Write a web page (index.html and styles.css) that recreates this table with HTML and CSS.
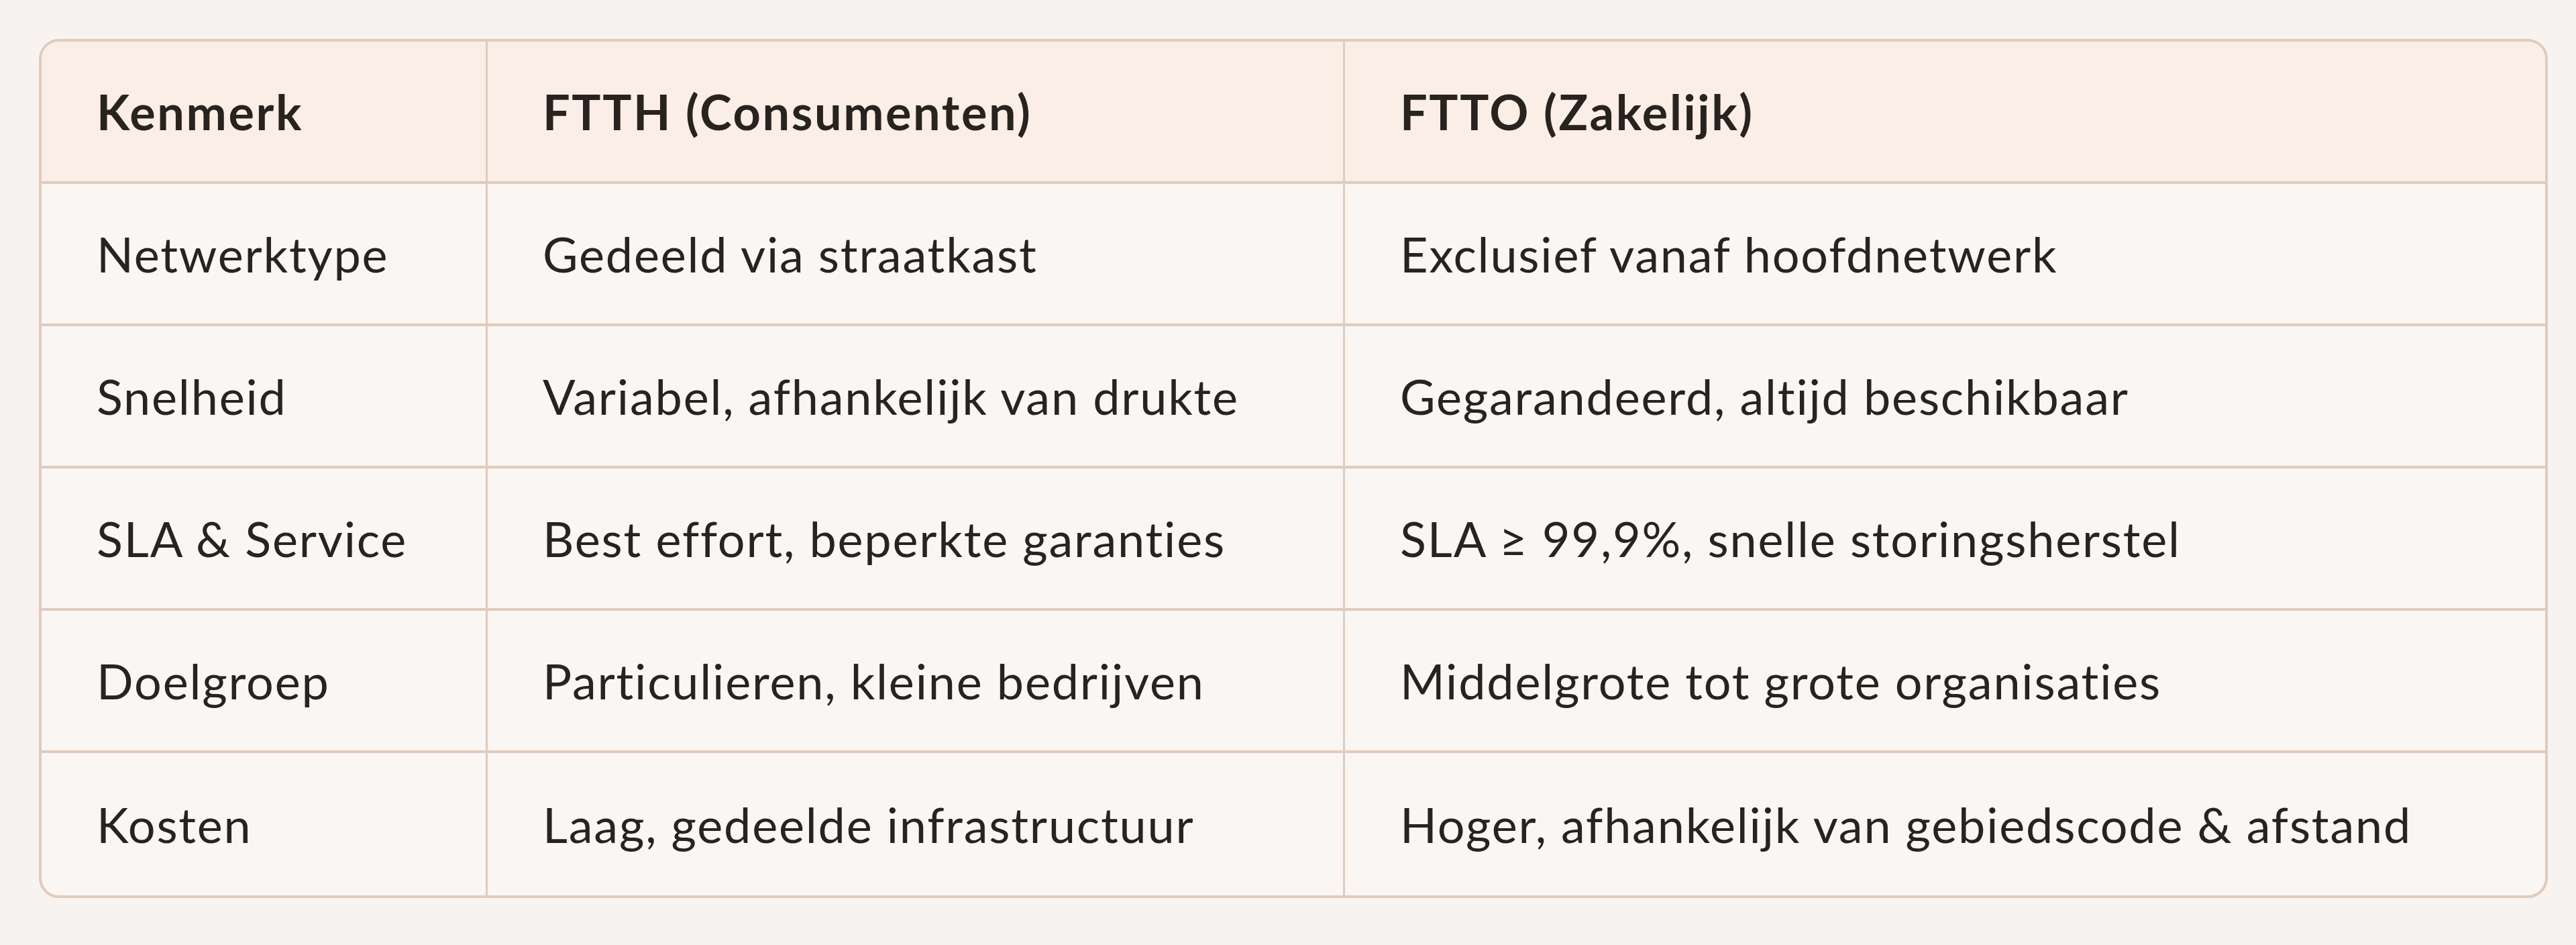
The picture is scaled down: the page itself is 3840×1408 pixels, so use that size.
FILE: index.html
```html
<!DOCTYPE html>
<html lang="nl">
<head>
<meta charset="utf-8">
<title>FTTH vs FTTO</title>
<link rel="stylesheet" href="styles.css">
</head>
<body>
<div class="page">
  <div class="table-wrap">
    <table class="compare">
      <colgroup>
        <col class="c1"><col class="c2"><col class="c3">
      </colgroup>
      <thead>
        <tr>
          <th>Kenmerk</th>
          <th>FTTH (Consumenten)</th>
          <th>FTTO (Zakelijk)</th>
        </tr>
      </thead>
      <tbody>
        <tr>
          <td>Netwerktype</td>
          <td>Gedeeld via straatkast</td>
          <td>Exclusief vanaf hoofdnetwerk</td>
        </tr>
        <tr>
          <td>Snelheid</td>
          <td>Variabel, afhankelijk van drukte</td>
          <td>Gegarandeerd, altijd beschikbaar</td>
        </tr>
        <tr>
          <td>SLA &amp; Service</td>
          <td>Best effort, beperkte garanties</td>
          <td>SLA ≥ 99,9%, snelle storingsherstel</td>
        </tr>
        <tr>
          <td>Doelgroep</td>
          <td>Particulieren, kleine bedrijven</td>
          <td>Middelgrote tot grote organisaties</td>
        </tr>
        <tr>
          <td>Kosten</td>
          <td>Laag, gedeelde infrastructuur</td>
          <td>Hoger, afhankelijk van gebiedscode &amp; afstand</td>
        </tr>
      </tbody>
    </table>
  </div>
</div>
</body>
</html>
```
FILE: styles.css
```css
html, body {
  margin: 0;
  padding: 0;
  background: #f7f3f0;
}

.page {
  padding: 58px 42px 58px 58px;
  font-family: "Lato", "Open Sans", "Liberation Sans", sans-serif;
  color: #28231f;
}

.table-wrap {
  width: 3740px;
  box-sizing: border-box;
  border: 4px solid #e0cbbc;
  border-radius: 30px;
  overflow: hidden;
  background: #faf6f3;
}

.compare {
  width: 100%;
  border-collapse: separate;
  border-spacing: 0;
  table-layout: fixed;
}

.c1 { width: 665px; }
.c2 { width: 1278px; }
.c3 { width: auto; }

.compare th,
.compare td {
  height: 212px;
  box-sizing: border-box;
  padding: 0 0 0 82px;
  text-align: left;
  vertical-align: middle;
  font-size: 72px;
  line-height: 1.2;
  letter-spacing: 1.8px;
  border-right: 3px solid #e0cbbc;
  border-bottom: 4px solid #e0cbbc;
  white-space: nowrap;
}

.compare th {
  background: #fbeee6;
  font-weight: 700;
  letter-spacing: 2.6px;
}

.compare td {
  font-weight: 400;
}

.compare th:last-child,
.compare td:last-child {
  border-right: none;
}

.compare tbody tr:last-child td {
  border-bottom: none;
}
```
